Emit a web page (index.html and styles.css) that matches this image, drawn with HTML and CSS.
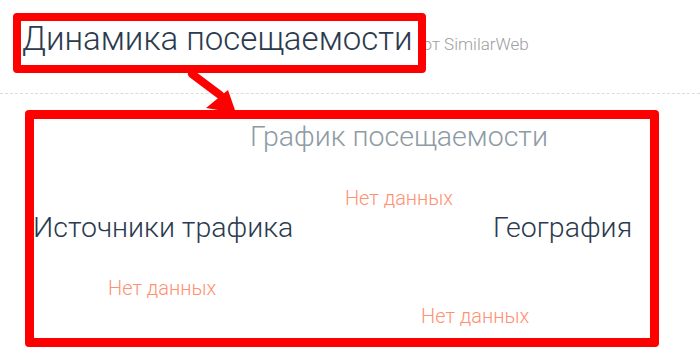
FILE: index.html
```html
<!DOCTYPE html>
<html lang="ru">
<head>
  <meta charset="UTF-8">
  <meta name="viewport" content="width=device-width, initial-scale=1.0">
  <title>Динамика посещаемости</title>
  <link rel="stylesheet" href="styles.css">
</head>
<body>
  <header class="head">
    <h1>Динамика посещаемости</h1>
    <span class="source">от SimilarWeb</span>
  </header>

  <main>
    <!-- Chart -->
    <section class="chart">
      <h2 class="chart-title">График посещаемости</h2>
      <p class="empty">Нет данных</p>
    </section>

    <!-- Sources / geography -->
    <div class="columns">
      <section class="col col-left">
        <h2>Источники трафика</h2>
        <p class="empty">Нет данных</p>
      </section>
      <section class="col col-right">
        <h2>География</h2>
        <p class="empty">Нет данных</p>
      </section>
    </div>
  </main>

  <!-- Annotation marks -->
  <div class="mark mark-title"></div>
  <div class="mark mark-body"></div>
  <svg class="arrow" width="70" height="50" viewBox="0 0 70 50">
    <line x1="8" y1="6" x2="36" y2="27" stroke="#ff0000" stroke-width="8" stroke-linecap="round"/>
    <polygon points="22,40 44,22 52,45" fill="#ff0000"/>
  </svg>
</body>
</html>
```

FILE: styles.css
```css
/* General */
body {
  margin: 0;
  font-family: Roboto, "Noto Sans", sans-serif;
  font-weight: 300;
  background: #ffffff;
  color: #2b3a4d;
  overflow: hidden;
}

h1, h2, p {
  margin: 0;
  font-weight: 300;
}

/* Header */
.head {
  display: flex;
  align-items: baseline;
  padding: 20px 0 35px 22px;
  border-bottom: 1px dashed #dcdcdc;
}

.head h1 {
  font-size: 33px;
  line-height: 38px;
  color: #2b3a4d;
}

.source {
  margin-left: 10px;
  font-size: 17px;
  color: #9e9e9e;
}

/* Chart */
.chart {
  padding-left: 98px;
  text-align: center;
}

.chart-title {
  margin-top: 26px;
  font-size: 28.5px;
  line-height: 34px;
  color: #8e9ba4;
}

.empty {
  font-size: 20px;
  line-height: 24px;
  color: #ff9072;
}

.chart .empty {
  margin-top: 32px;
}

/* Columns */
.columns {
  display: grid;
  grid-template-columns: 421px 1fr;
  margin-top: 1px;
}

.col h2 {
  font-size: 28.5px;
  line-height: 34px;
  color: #2b3a4d;
}

.col-left h2 {
  padding-left: 33px;
}

.col-left .empty {
  margin-top: 31px;
  padding-left: 108px;
}

.col-right h2 {
  padding-left: 72px;
}

.col-right .empty {
  margin-top: 59px;
}

/* Annotation overlay */
.mark {
  position: absolute;
  box-sizing: border-box;
  border: 8px solid #ff0000;
  border-radius: 4px;
}

.mark-title {
  left: 13px;
  top: 13px;
  width: 413px;
  height: 60px;
}

.mark-body {
  left: 25px;
  top: 110px;
  width: 634px;
  height: 237px;
  border-width: 9px;
}

.arrow {
  position: absolute;
  left: 184px;
  top: 68px;
}
```
